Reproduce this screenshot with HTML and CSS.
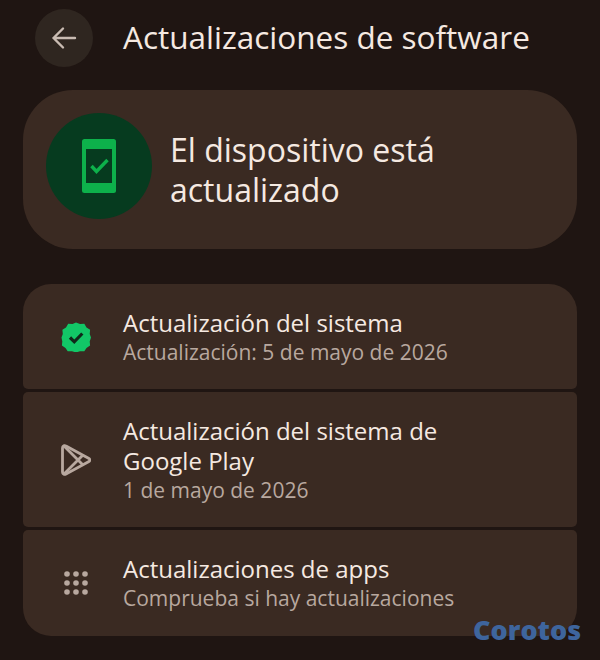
FILE: index.html
```html
<!DOCTYPE html>
<html lang="es">
<head>
<meta charset="utf-8">
<title>Actualizaciones de software</title>
<link rel="stylesheet" href="styles.css">
</head>
<body>
<div class="screen">
  <header class="topbar">
    <button class="back" aria-label="Atrás">
      <svg width="30" height="30" viewBox="0 0 30 30" fill="none" stroke="#c9bbb2" stroke-width="2.4" stroke-linecap="round" stroke-linejoin="round"><path d="M26 15H4.5M14 5.5 4.5 15l9.500 9.500"/></svg>
    </button>
    <h1 class="title">Actualizaciones de software</h1>
  </header>
  <section class="status">
    <div class="status-icon">
      <svg width="34" height="54" viewBox="0 0 34 54"><rect width="34" height="54" rx="2.500" fill="#0db14b"/><rect x="4" y="10" width="26" height="34" fill="#063b1f"/><path d="M9.500 27l5 5.500L25.500 21" fill="none" stroke="#0db14b" stroke-width="3.400"/></svg>
    </div>
    <p class="status-text">El dispositivo está actualizado</p>
  </section>
  <ul class="list">
    <li class="row row-first">
      <span class="row-icon">
        <svg width="30" height="30" viewBox="0 0 30 30"><path d="M15 .5l4 1.400 4.300-.1 2.200 3.700 3.600 2.300-.4 4.200 1.300 3.500-1.300 3.900.4 4-3.600 2.500-2.200 3.400-4.300-.1-4 1.300-4-1.300-4.300.1-2.200-3.400-3.600-2.500.4-4L.5 15.500l1.300-3.500-.4-4.200L5 5.500l2.200-3.700 4.300.1z" fill="#12c767"/><path d="M9 15.500l4.300 4.300 8-8.300" fill="none" stroke="#10291a" stroke-width="3.200"/></svg>
      </span>
      <div class="row-body">
        <div class="row-title">Actualización del sistema</div>
        <div class="row-sub">Actualización: 5 de mayo de 2026</div>
      </div>
    </li>
    <li class="row">
      <span class="row-icon">
        <svg width="30" height="32" viewBox="0 0 30 32" fill="none" stroke="#b8a89f" stroke-width="2.800" stroke-linejoin="round" stroke-linecap="round"><path d="M1.500 4c0-2 1.800-3 3.500-2l22.500 12.200c1.800 1 1.800 2.600 0 3.600L5 30c-1.700 1-3.500 0-3.500-2z"/><path d="M3 2 21.500 20.500M3 30 21.500 11.500"/></svg>
      </span>
      <div class="row-body">
        <div class="row-title">Actualización del sistema de Google Play</div>
        <div class="row-sub">1 de mayo de 2026</div>
      </div>
    </li>
    <li class="row row-last">
      <span class="row-icon">
        <svg width="24" height="24" viewBox="0 0 24 24" fill="#b8a89f"><circle cx="3" cy="3" r="2.800"/><circle cx="12" cy="3" r="2.800"/><circle cx="21" cy="3" r="2.800"/><circle cx="3" cy="12" r="2.800"/><circle cx="12" cy="12" r="2.800"/><circle cx="21" cy="12" r="2.800"/><circle cx="3" cy="21" r="2.800"/><circle cx="12" cy="21" r="2.800"/><circle cx="21" cy="21" r="2.800"/></svg>
      </span>
      <div class="row-body">
        <div class="row-title">Actualizaciones de apps</div>
        <div class="row-sub">Comprueba si hay actualizaciones</div>
      </div>
    </li>
  </ul>
  <div class="watermark">Corotos</div>
</div>
</body>
</html>
```
FILE: styles.css
```css
* { box-sizing: border-box; }
html, body { margin: 0; padding: 0; }
body { background: #1f1512; font-family: "Open Sans", "Liberation Sans", sans-serif; }
.screen { position: relative; width: 600px; height: 660px; padding: 9px 23px 0; overflow: hidden; }
.topbar { display: flex; align-items: center; height: 58px; padding-left: 12px; }
.back { display: flex; align-items: center; justify-content: center; flex: none; width: 58px; height: 58px; padding: 0; border: 0; border-radius: 50%; background: #2f2620; }
.title { margin: -2px 0 0 30px; font-size: 31.5px; font-weight: 400; line-height: 58px; color: #f5e9e1; white-space: nowrap; }
.status { display: flex; align-items: center; gap: 18px; height: 159px; margin-top: 23px; padding-left: 23px; border-radius: 50px; background: #3a2a22; }
.status-icon { display: flex; align-items: center; justify-content: center; flex: none; align-self: flex-start; width: 106px; height: 106px; margin-top: 23px; border-radius: 50%; background: #063b1f; }
.status-text { width: 340px; margin: 0; font-size: 32px; line-height: 40px; color: #f5e9e1; }
.list { display: flex; flex-direction: column; gap: 3px; margin: 35px 0 0; padding: 0; list-style: none; }
.row { display: flex; align-items: center; gap: 27px; padding-left: 33px; border-radius: 5px; background: #3a2a22; min-height: 105px; }
.row:nth-child(2) { min-height: 135px; }
.row-first { border-radius: 28px 28px 5px 5px; }
.row-last { border-radius: 5px 5px 28px 28px; min-height: 106px; }
.row-icon { display: flex; align-items: center; justify-content: center; flex: none; width: 40px; height: 40px; }
.row-body { width: 370px; }
.row-title { font-size: 24px; font-weight: 500; line-height: 30px; color: #f5e9e1; }
.row-sub { font-size: 21px; line-height: 28px; color: #b8a89f; }
.watermark { position: absolute; left: 473px; top: 614px; font-size: 27px; line-height: 32px; font-weight: 800; color: #3e659d; }
```
